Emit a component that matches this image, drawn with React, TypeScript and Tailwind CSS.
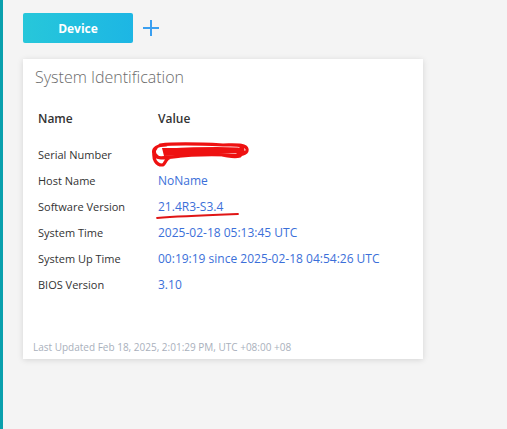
import React from "react";

const rows: [string, string][] = [
  ["Serial Number", ""],
  ["Host Name", "NoName"],
  ["Software Version", "21.4R3-S3.4"],
  ["System Time", "2025-02-18 05:13:45 UTC"],
  ["System Up Time", "00:19:19 since 2025-02-18 04:54:26 UTC"],
  ["BIOS Version", "3.10"],
];

export default function App() {
  return (
    <div className="flex min-h-[429px] bg-[#f4f4f4]" style={{ fontFamily: '"Open Sans", "Noto Sans", sans-serif' }}>
      <div className="w-[3px] shrink-0 bg-[#0aa0ad]" />
      <div className="flex flex-col pl-[20px] pt-[13px]">
        <div className="flex items-center gap-[8px]">
          <button className="flex h-[30px] w-[110px] items-center justify-center rounded-[2px] bg-gradient-to-r from-[#27c7da] to-[#1db6e4] pt-[1px] text-[12px] font-bold text-white">
            Device
          </button>
          <svg width="18" height="18" viewBox="0 0 18 18" className="ml-[1px]">
            <path d="M9 1V17M1 9H17" stroke="#3a9ff0" strokeWidth="2" fill="none" />
          </svg>
        </div>
        <div className="mt-[16px] flex h-[300px] w-[400px] flex-col bg-white shadow-[0_1px_6px_rgba(0,0,0,0.13)]">
          <div className="pl-[12px] pt-[7px] text-[16px] font-light leading-[22px] text-[#6b6b6b]">System Identification</div>
          <div className="mt-[19px] pl-[15px]">
            <div className="flex h-[24px] items-center text-[12px] font-semibold text-[#333]">
              <div className="w-[120px]">Name</div>
              <div>Value</div>
            </div>
            <div className="mt-[11px]">
              {rows.map(([k, v], i) => (
                <div key={k} className="flex h-[26px] items-center">
                  <div className="w-[120px] text-[11px] text-[#333]">{k}</div>
                  <div className="relative text-[12px] text-[#3b6fd9]">
                    {v}
                    {i === 0 && (
                      <svg width="104" height="28" viewBox="0 0 104 28" className="absolute left-[-10px] top-[-13px]">
                        <path
                          d="M12 3 C30 1 55 2 75 3 C88 3 98 2 99 7 C100 12 92 14 80 13 C62 12 40 13 22 15 C14 16 8 17 6 12 C4 6 10 3 18 3 M6 10 C5 17 8 23 14 23 C18 23 16 16 24 15 M8 6 C4 10 8 16 14 16 C30 15 50 11 70 10 C82 9 92 9 96 10 M20 8 C40 7 60 6 90 7 M92 4 C96 6 96 10 90 11 M70 12 C78 14 86 16 92 14"
                          stroke="#ee1111"
                          strokeWidth="3.2"
                          fill="none"
                          strokeLinecap="round"
                          strokeLinejoin="round"
                        />
                        <path d="M14 6 L94 6 L92 11 L16 14 Z" fill="#ee1111" />
                      </svg>
                    )}
                    {i === 2 && (
                      <svg width="86" height="8" viewBox="0 0 86 8" className="absolute left-[-2px] top-[15px]">
                        <path d="M1 5 C25 3 55 2 82 1" stroke="#e01515" strokeWidth="1.8" fill="none" strokeLinecap="round" />
                      </svg>
                    )}
                  </div>
                </div>
              ))}
            </div>
          </div>
          <div className="mt-auto pb-[4px] pl-[10px] text-[10px] text-[#a9b0bc]">
            Last Updated Feb 18, 2025, 2:01:29 PM, UTC +08:00 +08
          </div>
        </div>
      </div>
    </div>
  );
}
